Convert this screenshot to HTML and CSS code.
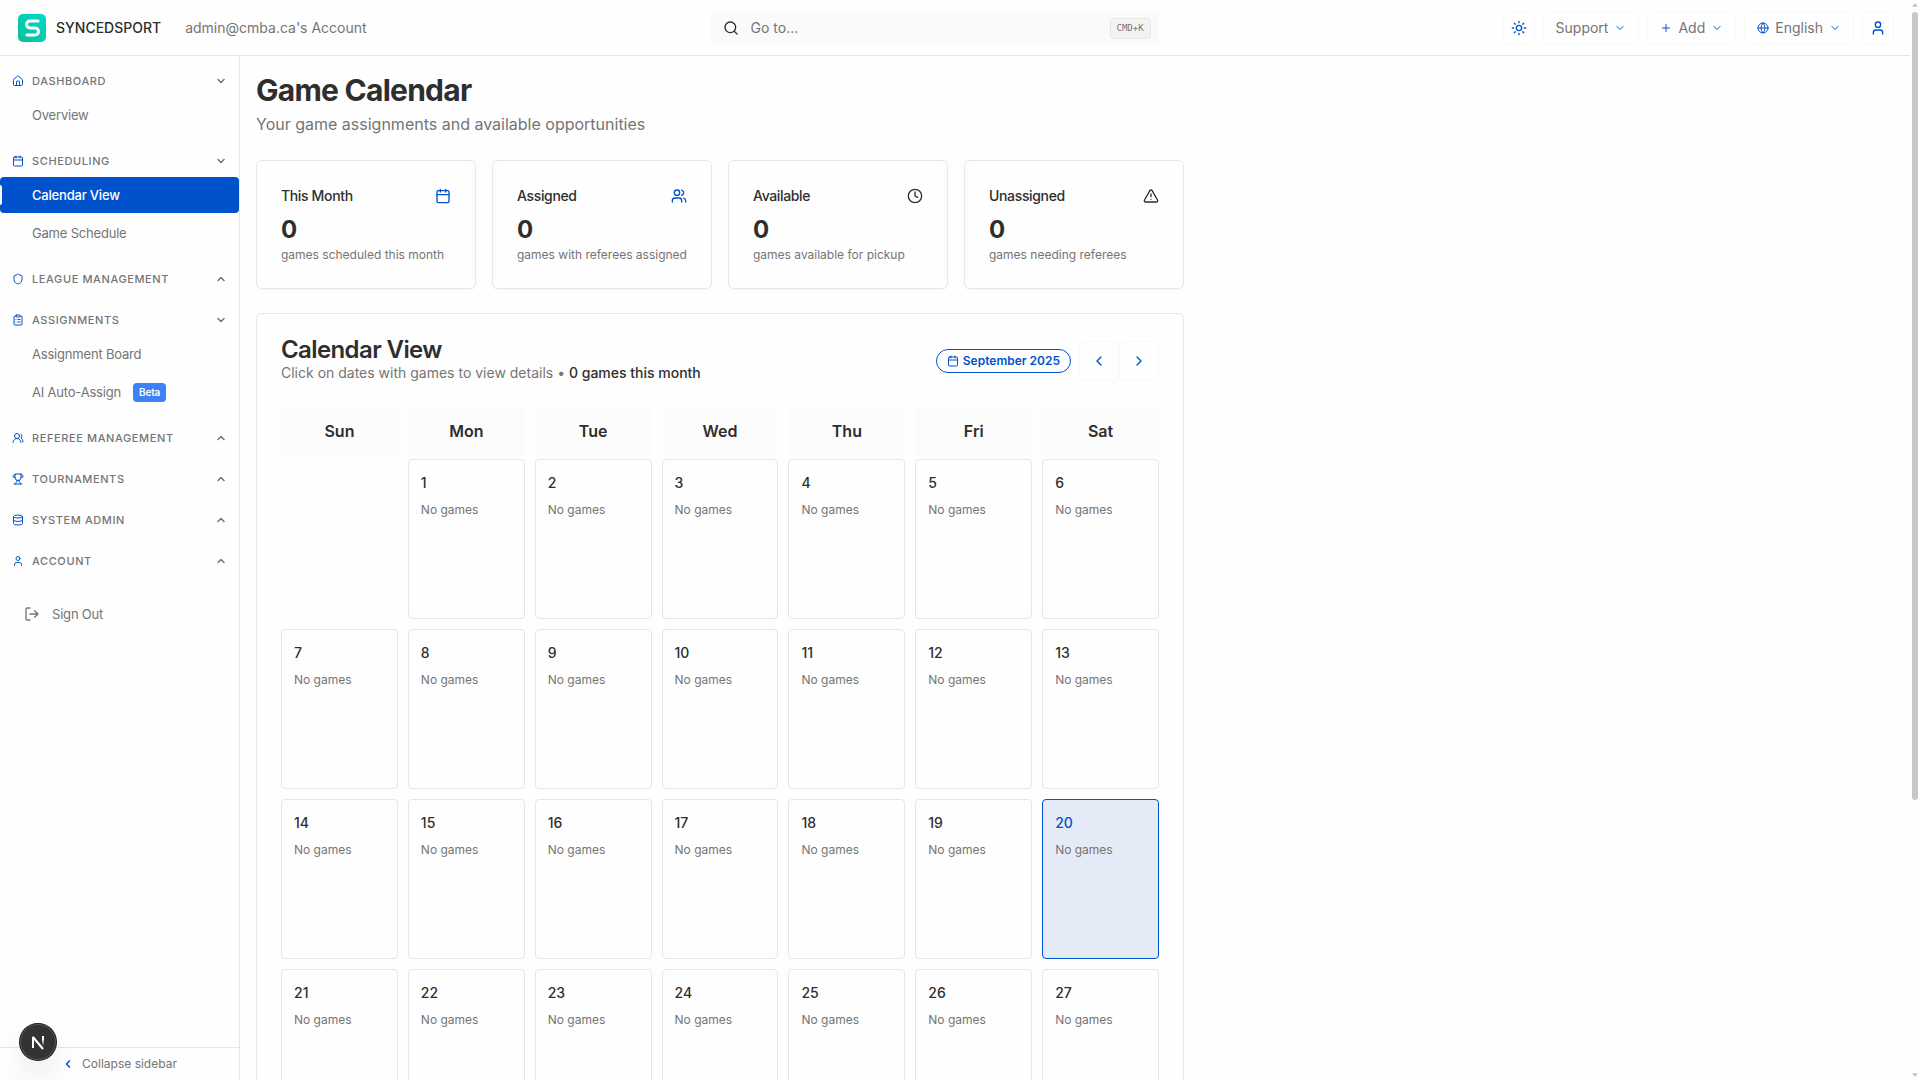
FILE: index.html
```html
<!DOCTYPE html>
<html lang="en">
<head>
<meta charset="utf-8">
<meta name="viewport" content="width=device-width, initial-scale=1">
<title>Game Calendar - SyncedSport</title>
<link rel="stylesheet" href="styles.css">
</head>
<body>
<svg class="sprite" aria-hidden="true">
  <symbol id="i-down" viewBox="0 0 24 24"><path d="m6 9 6 6 6-6"/></symbol>
  <symbol id="i-up" viewBox="0 0 24 24"><path d="m18 15-6-6-6 6"/></symbol>
  <symbol id="i-left" viewBox="0 0 24 24"><path d="m15 18-6-6 6-6"/></symbol>
  <symbol id="i-right" viewBox="0 0 24 24"><path d="m9 18 6-6-6-6"/></symbol>
  <symbol id="i-home" viewBox="0 0 24 24"><path d="M15 21v-8a1 1 0 0 0-1-1h-4a1 1 0 0 0-1 1v8"/><path d="M3 10a2 2 0 0 1 .709-1.528l7-5.999a2 2 0 0 1 2.582 0l7 5.999A2 2 0 0 1 21 10v9a2 2 0 0 1-2 2H5a2 2 0 0 1-2-2z"/></symbol>
  <symbol id="i-calendar" viewBox="0 0 24 24"><path d="M8 2v4M16 2v4M3 10h18"/><rect width="18" height="18" x="3" y="4" rx="2"/></symbol>
  <symbol id="i-shield" viewBox="0 0 24 24"><path d="M20 13c0 5-3.500 7.500-7.660 8.950a1 1 0 0 1-.670-.010C7.500 20.500 4 18 4 13V6a1 1 0 0 1 1-1c2 0 4.500-1.200 6.240-2.720a1.170 1.170 0 0 1 1.520 0C14.510 3.810 17 5 19 5a1 1 0 0 1 1 1z"/></symbol>
  <symbol id="i-clipboard" viewBox="0 0 24 24"><rect width="8" height="4" x="8" y="2" rx="1"/><path d="M16 4h2a2 2 0 0 1 2 2v14a2 2 0 0 1-2 2H6a2 2 0 0 1-2-2V6a2 2 0 0 1 2-2h2M12 11h4M12 16h4M8 11h.01M8 16h.01"/></symbol>
  <symbol id="i-users" viewBox="0 0 24 24"><path d="M18 21a8 8 0 0 0-16 0"/><circle cx="10" cy="8" r="5"/><path d="M22 20c0-3.370-2-6.500-4-8a5 5 0 0 0-.450-8.300"/></symbol>
  <symbol id="i-team" viewBox="0 0 24 24"><path d="M16 21v-2a4 4 0 0 0-4-4H6a4 4 0 0 0-4 4v2"/><circle cx="9" cy="7" r="4"/><path d="M22 21v-2a4 4 0 0 0-3-3.870M16 3.130a4 4 0 0 1 0 7.750"/></symbol>
  <symbol id="i-trophy" viewBox="0 0 24 24"><path d="M6 9H4.500a2.500 2.500 0 0 1 0-5H6M18 9h1.500a2.500 2.500 0 0 0 0-5H18M4 22h16M10 14.660V17c0 .550-.470.980-.970 1.210C7.850 18.750 7 20.240 7 22M14 14.660V17c0 .550.470.980.970 1.210C16.150 18.750 17 20.240 17 22M18 2H6v7a6 6 0 0 0 12 0V2Z"/></symbol>
  <symbol id="i-database" viewBox="0 0 24 24"><ellipse cx="12" cy="5" rx="9" ry="3"/><path d="M3 5v14a9 3 0 0 0 18 0V5M3 12a9 3 0 0 0 18 0"/></symbol>
  <symbol id="i-user" viewBox="0 0 24 24"><path d="M19 21v-2a4 4 0 0 0-4-4H9a4 4 0 0 0-4 4v2"/><circle cx="12" cy="7" r="4"/></symbol>
  <symbol id="i-logout" viewBox="0 0 24 24"><path d="M9 21H5a2 2 0 0 1-2-2V5a2 2 0 0 1 2-2h4M16 17l5-5-5-5M21 12H9"/></symbol>
  <symbol id="i-search" viewBox="0 0 24 24"><circle cx="11" cy="11" r="8"/><path d="m21 21-4.300-4.300"/></symbol>
  <symbol id="i-sun" viewBox="0 0 24 24"><circle cx="12" cy="12" r="4"/><path d="M12 2v2M12 20v2M4.930 4.930l1.410 1.410M17.660 17.660l1.410 1.410M2 12h2M20 12h2M6.340 17.660l-1.410 1.410M19.070 4.930l-1.410 1.410"/></symbol>
  <symbol id="i-plus" viewBox="0 0 24 24"><path d="M5 12h14M12 5v14"/></symbol>
  <symbol id="i-globe" viewBox="0 0 24 24"><circle cx="12" cy="12" r="10"/><path d="M12 2a14.500 14.500 0 0 0 0 20 14.500 14.500 0 0 0 0-20M2 12h20"/></symbol>
  <symbol id="i-clock" viewBox="0 0 24 24"><circle cx="12" cy="12" r="10"/><path d="M12 6v6l4 2"/></symbol>
  <symbol id="i-alert" viewBox="0 0 24 24"><path d="m21.730 18-8-14a2 2 0 0 0-3.480 0l-8 14A2 2 0 0 0 4 21h16a2 2 0 0 0 1.730-3M12 9v4M12 17h.01"/></symbol>
</svg>

<div class="window">
  <div class="app">
    <header class="topbar">
      <div class="brand">
        <svg class="logo" viewBox="0 0 28 28" aria-hidden="true">
          <defs><linearGradient id="logo-fill" x1="1" y1="0" x2="0" y2="1"><stop offset="0" stop-color="#00d9d0"/><stop offset="1" stop-color="#0dbf97"/></linearGradient></defs>
          <rect width="28" height="28" rx="5" fill="url(#logo-fill)"/>
          <path d="M20 7H12a3.500 3.500 0 0 0 0 7h5a3.500 3.500 0 0 1 0 7H9" fill="none" stroke="#fff" stroke-width="3" stroke-linecap="round"/>
        </svg>
        <span class="brand-name">SYNCEDSPORT</span>
        <span class="account">admin@cmba.ca's Account</span>
      </div>
      <label class="search">
        <svg class="icon icon-16"><use href="#i-search"/></svg>
        <input type="search" placeholder="Go to..." aria-label="Go to">
        <kbd>CMD+K</kbd>
      </label>
      <div class="actions">
        <button class="btn btn-square" type="button" aria-label="Toggle theme"><svg class="icon icon-16"><use href="#i-sun"/></svg></button>
        <button class="btn" type="button">Support<svg class="icon icon-12"><use href="#i-down"/></svg></button>
        <button class="btn" type="button"><svg class="icon icon-12"><use href="#i-plus"/></svg>Add<svg class="icon icon-12"><use href="#i-down"/></svg></button>
        <button class="btn" type="button"><svg class="icon icon-12"><use href="#i-globe"/></svg>English<svg class="icon icon-12"><use href="#i-down"/></svg></button>
        <button class="btn btn-square" type="button" aria-label="Profile"><svg class="icon icon-16"><use href="#i-user"/></svg></button>
      </div>
    </header>

    <div class="body">
      <aside class="sidebar">
        <nav class="nav">
          <section>
            <button class="group" type="button" aria-expanded="true"><svg class="icon icon-12"><use href="#i-home"/></svg><span>DASHBOARD</span><svg class="icon icon-12 caret"><use href="#i-down"/></svg></button>
            <div class="links"><a href="#">Overview</a></div>
          </section>
          <section>
            <button class="group" type="button" aria-expanded="true"><svg class="icon icon-12"><use href="#i-calendar"/></svg><span>SCHEDULING</span><svg class="icon icon-12 caret"><use href="#i-down"/></svg></button>
            <div class="links"><a class="active" href="#" aria-current="page">Calendar View</a><a href="#">Game Schedule</a></div>
          </section>
          <section>
            <button class="group" type="button" aria-expanded="false"><svg class="icon icon-12"><use href="#i-shield"/></svg><span>LEAGUE MANAGEMENT</span><svg class="icon icon-12 caret"><use href="#i-up"/></svg></button>
          </section>
          <section>
            <button class="group" type="button" aria-expanded="true"><svg class="icon icon-12"><use href="#i-clipboard"/></svg><span>ASSIGNMENTS</span><svg class="icon icon-12 caret"><use href="#i-down"/></svg></button>
            <div class="links"><a href="#">Assignment Board</a><a href="#">AI Auto-Assign<span class="beta">Beta</span></a></div>
          </section>
          <section>
            <button class="group" type="button" aria-expanded="false"><svg class="icon icon-12"><use href="#i-users"/></svg><span>REFEREE MANAGEMENT</span><svg class="icon icon-12 caret"><use href="#i-up"/></svg></button>
          </section>
          <section>
            <button class="group" type="button" aria-expanded="false"><svg class="icon icon-12"><use href="#i-trophy"/></svg><span>TOURNAMENTS</span><svg class="icon icon-12 caret"><use href="#i-up"/></svg></button>
          </section>
          <section>
            <button class="group" type="button" aria-expanded="false"><svg class="icon icon-12"><use href="#i-database"/></svg><span>SYSTEM ADMIN</span><svg class="icon icon-12 caret"><use href="#i-up"/></svg></button>
          </section>
          <section>
            <button class="group" type="button" aria-expanded="false"><svg class="icon icon-12"><use href="#i-user"/></svg><span>ACCOUNT</span><svg class="icon icon-12 caret"><use href="#i-up"/></svg></button>
          </section>
          <button class="signout" type="button"><svg class="icon icon-16"><use href="#i-logout"/></svg>Sign Out</button>
        </nav>
        <button class="collapse" type="button"><svg class="icon icon-12"><use href="#i-left"/></svg>Collapse sidebar</button>
      </aside>

      <main class="main">
        <div class="content">
          <div class="page-head">
            <h1>Game Calendar</h1>
            <p>Your game assignments and available opportunities</p>
          </div>

          <div class="stats">
            <article class="card">
              <h2>This Month<svg class="icon icon-16 blue"><use href="#i-calendar"/></svg></h2>
              <strong>0</strong>
              <p>games scheduled this month</p>
            </article>
            <article class="card">
              <h2>Assigned<svg class="icon icon-16 blue"><use href="#i-team"/></svg></h2>
              <strong>0</strong>
              <p>games with referees assigned</p>
            </article>
            <article class="card">
              <h2>Available<svg class="icon icon-16"><use href="#i-clock"/></svg></h2>
              <strong>0</strong>
              <p>games available for pickup</p>
            </article>
            <article class="card">
              <h2>Unassigned<svg class="icon icon-16"><use href="#i-alert"/></svg></h2>
              <strong>0</strong>
              <p>games needing referees</p>
            </article>
          </div>

          <section class="card calendar">
            <div class="calendar-head">
              <div>
                <h2>Calendar View</h2>
                <p>Click on dates with games to view details • <b>0 games this month</b></p>
              </div>
              <div class="pager">
                <span class="month"><svg class="icon icon-12"><use href="#i-calendar"/></svg>September 2025</span>
                <div class="steps">
                  <button class="step" type="button" aria-label="Previous month"><svg class="icon icon-16"><use href="#i-left"/></svg></button>
                  <button class="step" type="button" aria-label="Next month"><svg class="icon icon-16"><use href="#i-right"/></svg></button>
                </div>
              </div>
            </div>
            <table class="month-grid">
              <thead>
                <tr><th scope="col">Sun</th><th scope="col">Mon</th><th scope="col">Tue</th><th scope="col">Wed</th><th scope="col">Thu</th><th scope="col">Fri</th><th scope="col">Sat</th></tr>
              </thead>
              <tbody>
                <tr><td class="blank"></td><td><b>1</b><p>No games</p></td><td><b>2</b><p>No games</p></td><td><b>3</b><p>No games</p></td><td><b>4</b><p>No games</p></td><td><b>5</b><p>No games</p></td><td><b>6</b><p>No games</p></td></tr>
                <tr><td><b>7</b><p>No games</p></td><td><b>8</b><p>No games</p></td><td><b>9</b><p>No games</p></td><td><b>10</b><p>No games</p></td><td><b>11</b><p>No games</p></td><td><b>12</b><p>No games</p></td><td><b>13</b><p>No games</p></td></tr>
                <tr><td><b>14</b><p>No games</p></td><td><b>15</b><p>No games</p></td><td><b>16</b><p>No games</p></td><td><b>17</b><p>No games</p></td><td><b>18</b><p>No games</p></td><td><b>19</b><p>No games</p></td><td class="today"><b>20</b><p>No games</p></td></tr>
                <tr><td><b>21</b><p>No games</p></td><td><b>22</b><p>No games</p></td><td><b>23</b><p>No games</p></td><td><b>24</b><p>No games</p></td><td><b>25</b><p>No games</p></td><td><b>26</b><p>No games</p></td><td><b>27</b><p>No games</p></td></tr>
              </tbody>
            </table>
          </section>
        </div>
      </main>
    </div>
  </div>

  <div class="scrollbar" aria-hidden="true">
    <svg class="arrow" viewBox="0 0 6 4"><path d="M3 0 6 4H0z"/></svg>
    <div class="track"><div class="thumb"></div></div>
    <svg class="arrow" viewBox="0 0 6 4"><path d="M0 0h6L3 4z"/></svg>
  </div>
</div>

<button class="dev-badge" type="button" aria-label="Developer tools">
  <svg viewBox="0 0 36 36" aria-hidden="true">
    <defs><linearGradient id="stem" x1="0" y1="0" x2="0" y2="1"><stop offset=".3" stop-color="#fff"/><stop offset="1" stop-color="#fff" stop-opacity="0"/></linearGradient></defs>
    <path d="M13 24V13l10 12" fill="none" stroke="#fff" stroke-width="2" stroke-linejoin="bevel"/>
    <rect x="22" y="12" width="2" height="10" fill="url(#stem)"/>
  </svg>
</button>
</body>
</html>
```
FILE: styles.css
```css
:root {
  --blue: #0052cc;
  --ink: #2e2e2e;
  --muted: #757575;
  --line: #e6e6e6;
  --faint: #f8f8f8;
  --page: #fefefe;
}

* { box-sizing: border-box; }

body {
  margin: 0;
  background: var(--page);
  color: var(--ink);
  font: 14px/20px Inter, "Liberation Sans", sans-serif;
}

h1, h2, p { margin: 0; }
button, input { font: inherit; color: inherit; }
button { padding: 0; border: 0; background: none; cursor: pointer; }
a { color: inherit; text-decoration: none; }

.sprite { display: none; }
.icon {
  flex: none;
  fill: none;
  stroke: currentColor;
  stroke-width: 2;
  stroke-linecap: round;
  stroke-linejoin: round;
}
.icon-12 { width: 12px; height: 12px; }
.icon-16 { width: 16px; height: 16px; }
.blue { color: var(--blue); }

.window { display: flex; height: 100vh; overflow: hidden; }
.app { flex: 1; min-width: 0; display: flex; flex-direction: column; }

/* Top bar */
.topbar {
  display: flex;
  align-items: center;
  justify-content: space-between;
  gap: 16px;
  padding: 12px 16px 11px 18px;
  border-bottom: 1px solid var(--line);
}
.brand { display: flex; align-items: center; }
.logo { width: 28px; height: 28px; margin-right: 10px; }
.brand-name { font-weight: 500; margin-right: 24px; }
.account { color: var(--muted); }

.search {
  display: flex;
  align-items: center;
  flex: 0 1 448px;
  height: 32px;
  gap: 12px;
  padding: 0 8px 0 12px;
  border-radius: 4px;
  background: #fafafa;
}
.search input {
  flex: 1;
  min-width: 0;
  padding: 0;
  border: 0;
  outline: 0;
  background: none;
}
.search input::placeholder { color: var(--muted); opacity: 1; }
.search kbd {
  padding: 2px 6px;
  border: 1px solid var(--line);
  border-radius: 4px;
  background: #f3f3f3;
  color: var(--muted);
  font: 9px/15px "DejaVu Sans Mono", monospace;
}

.actions { display: flex; gap: 8px; }
.btn {
  display: flex;
  align-items: center;
  justify-content: center;
  gap: 6px;
  height: 32px;
  padding: 0 12px;
  border: 1px solid var(--faint);
  border-radius: 4px;
  color: var(--muted);
}
.btn-square { width: 32px; padding: 0; }
.btn .icon { color: var(--blue); }

/* Sidebar */
.body { flex: 1; min-height: 0; display: flex; }
.sidebar {
  flex: none;
  width: 240px;
  display: flex;
  flex-direction: column;
  border-right: 1px solid var(--line);
  color: var(--muted);
}
.nav {
  flex: 1;
  min-height: 0;
  display: flex;
  flex-direction: column;
  gap: 9px;
  padding-top: 9px;
  overflow: hidden;
  font-size: 13px;
  letter-spacing: -0.015em;
}
.group {
  display: flex;
  align-items: center;
  gap: 8px;
  width: 100%;
  height: 32px;
  padding: 0 12px;
  font-size: 11px;
  font-weight: 500;
  line-height: 16px;
  letter-spacing: 0.055em;
  text-align: left;
}
.group .icon { color: var(--blue); }
.group .caret { margin-left: auto; color: var(--muted); stroke-width: 3; }
.links { display: flex; flex-direction: column; gap: 2px; padding-bottom: 3px; }
.links a {
  display: flex;
  align-items: center;
  height: 36px;
  padding-left: 32px;
  border-radius: 4px;
}
.links .active {
  position: relative;
  background: var(--blue);
  color: #fff;
  font-weight: 500;
}
.links .active::before {
  content: "";
  position: absolute;
  left: 0;
  top: 8px;
  width: 2px;
  height: 20px;
  border-radius: 0 2px 2px 0;
  background: #fff;
}
.beta {
  margin-left: 12px;
  padding: 0 6px;
  border-radius: 4px;
  background: #3b82f6;
  color: #fff;
  font-size: 10px;
  font-weight: 600;
  line-height: 19px;
}
.signout {
  display: flex;
  align-items: center;
  gap: 12px;
  height: 36px;
  margin-top: 10px;
  padding-left: 24px;
  letter-spacing: inherit;
}
.collapse {
  display: flex;
  align-items: center;
  justify-content: center;
  gap: 8px;
  height: 33px;
  padding-bottom: 1px;
  border-top: 1px solid var(--line);
  font-size: 12px;
}
.collapse .icon { color: var(--blue); stroke-width: 3; }

/* Main column */
.main { flex: 1; min-width: 0; padding: 16px; overflow: hidden; }
.content { max-width: 928px; display: flex; flex-direction: column; gap: 24px; }
.page-head h1 {
  margin-bottom: 4px;
  font-size: 30px;
  line-height: 36px;
  font-weight: 700;
  letter-spacing: -0.025em;
}
.page-head p { font-size: 16px; line-height: 24px; color: var(--muted); }

.card {
  padding: 24px;
  border: 1px solid var(--line);
  border-radius: 6px;
  box-shadow: 0 1px 2px rgba(0, 0, 0, 0.04);
}
.stats { display: grid; grid-template-columns: repeat(4, minmax(0, 1fr)); gap: 16px; }
.stats .card { padding-bottom: 25px; }
.stats h2 {
  display: flex;
  align-items: center;
  justify-content: space-between;
  margin-bottom: 8px;
  font-size: 14px;
  line-height: 22px;
  font-weight: 500;
  letter-spacing: -0.025em;
}
.stats strong { display: block; margin-bottom: 2px; font-size: 24px; line-height: 30px; font-weight: 700; }
.stats p { font-size: 12px; line-height: 16px; color: var(--muted); white-space: nowrap; }

/* Calendar */
.calendar-head { display: flex; align-items: center; justify-content: space-between; margin-bottom: 24px; }
.calendar-head h2 { font-size: 24px; line-height: 24px; font-weight: 600; letter-spacing: -0.025em; }
.calendar-head p { line-height: 21px; color: var(--muted); }
.calendar-head b { font-weight: 500; color: var(--ink); }
.pager { display: flex; align-items: center; gap: 8px; }
.month {
  display: flex;
  align-items: center;
  gap: 4px;
  padding: 0 10px;
  border: 1px solid var(--blue);
  border-radius: 12px;
  color: var(--blue);
  font-size: 12px;
  line-height: 22px;
  font-weight: 600;
}
.steps { display: flex; }
.step {
  display: grid;
  place-items: center;
  width: 40px;
  height: 40px;
  margin: -8px 0;
  border: 1px solid var(--faint);
  border-radius: 4px;
  color: var(--blue);
}

.month-grid, .month-grid thead, .month-grid tbody { display: block; }
.month-grid thead { margin-bottom: 4px; }
.month-grid tr { display: grid; grid-template-columns: repeat(7, 1fr); gap: 10px; }
.month-grid tbody tr { margin-bottom: 10px; }
.month-grid th {
  padding: 12px 0;
  border-radius: 4px;
  background: #fcfcfc;
  font-size: 16px;
  line-height: 24px;
  font-weight: 600;
}
.month-grid td {
  min-height: 160px;
  padding: 12px;
  border: 1px solid var(--line);
  border-radius: 4px;
}
.month-grid .blank { border-color: transparent; }
.month-grid b { display: block; margin-bottom: 8px; line-height: 21px; font-weight: 500; }
.month-grid p { font-size: 12px; line-height: 17px; color: var(--muted); }
.month-grid .today { border-color: var(--blue); background: #e4eaf6; }
.month-grid .today b { color: var(--blue); }

/* Window scrollbar */
.scrollbar {
  flex: none;
  width: 10px;
  display: flex;
  flex-direction: column;
  gap: 5px;
  padding: 3px 2px;
}
.arrow { width: 6px; height: 4px; fill: #c8c8c8; }
.track { flex: 1; }
.thumb { height: 74.6%; border-radius: 3px; background: #c8c8c8; }

.dev-badge {
  position: fixed;
  left: 20px;
  bottom: 20px;
  width: 36px;
  height: 36px;
  border-radius: 50%;
  background: #333;
  box-shadow: 0 0 0 1px #171717, inset 0 0 0 1px #555, 0 16px 32px -8px rgba(0, 0, 0, 0.24);
}
.dev-badge svg { display: block; width: 36px; height: 36px; }
```
